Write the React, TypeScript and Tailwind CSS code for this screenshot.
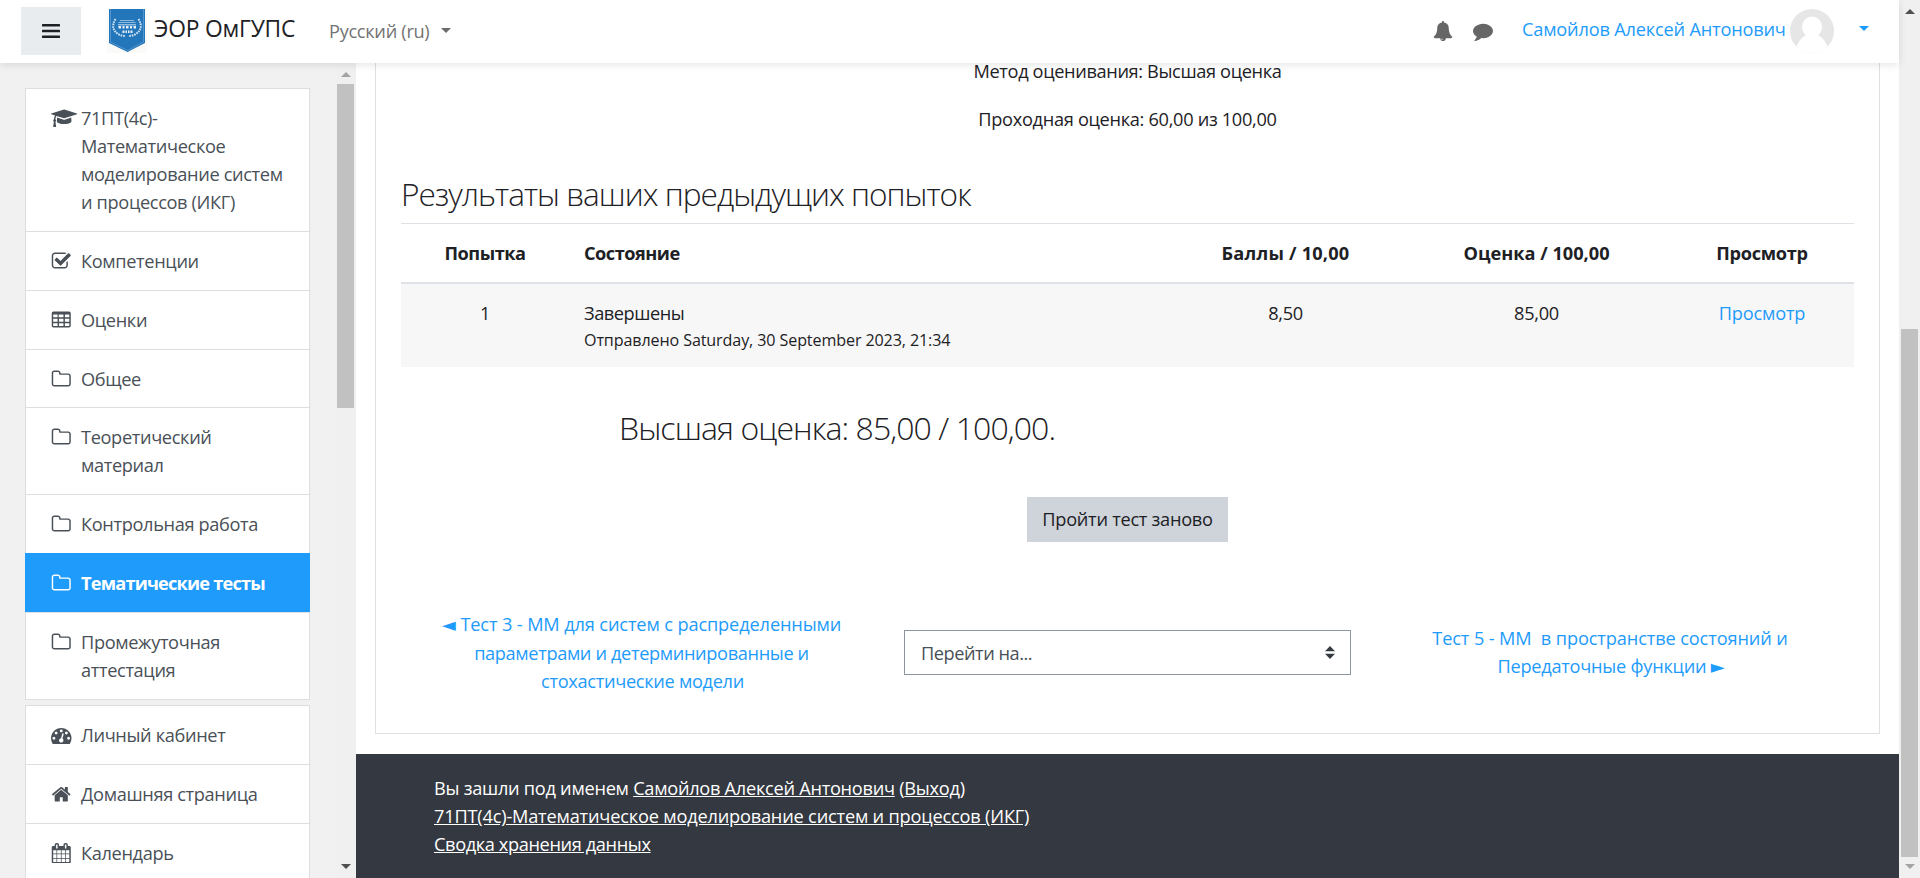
import type { ReactNode } from "react";

const paths = {
  folder:
    "M1600 1312v-704q0-40-28-68t-68-28h-704q-40 0-68-28t-28-68v-64q0-40-28-68t-68-28h-320q-40 0-68 28t-28 68v960q0 40 28 68t68 28h1216q40 0 68-28t28-68zm128-704v704q0 92-66 158t-158 66h-1216q-92 0-158-66t-66-158v-960q0-92 66-158t158-66h320q92 0 158 66t66 158v32h672q92 0 158 66t66 158z",
  check:
    "M1472 930v318q0 119-84.5 203.5t-203.5 84.5h-832q-119 0-203.5-84.5t-84.5-203.5v-832q0-119 84.5-203.5t203.5-84.5h832q63 0 117 25 15 7 18 23 3 17-9 29l-49 49q-10 10-23 10-3 0-9-2-23-6-45-6h-832q-66 0-113 47t-47 113v832q0 66 47 113t113 47h832q66 0 113-47t47-113v-254q0-13 9-22l64-64q10-10 23-10 6 0 12 3 20 8 20 29zm231-489l-814 814q-24 24-57 24t-57-24l-430-430q-24-24-24-57t24-57l110-110q24-24 57-24t57 24l263 263 647-647q24-24 57-24t57 24l110 110q24 24 24 57t-24 57z",
  table:
    "M224 128h1344a160 160 0 0 1 160 160v1088a160 160 0 0 1-160 160H224a160 160 0 0 1-160-160V288a160 160 0 0 1 160-160zM192 416v192a32 32 0 0 0 32 32h320a32 32 0 0 0 32-32V416a32 32 0 0 0-32-32H224a32 32 0 0 0-32 32zM704 384a32 32 0 0 0-32 32v192a32 32 0 0 0 32 32h352a32 32 0 0 0 32-32V416a32 32 0 0 0-32-32zM1248 384a32 32 0 0 0-32 32v192a32 32 0 0 0 32 32h320a32 32 0 0 0 32-32V416a32 32 0 0 0-32-32zM192 768h384v256H192zM704 768h384v256H704zM1216 768h384v256h-384zM192 1152h384v256H192zM704 1152h384v256H704zM1216 1152h384v256h-384z",
  gauge:
    "M384 1152q0-53-37.5-90.5t-90.5-37.5-90.5 37.5-37.5 90.5 37.5 90.5 90.5 37.5 90.5-37.5 37.5-90.5zm192-448q0-53-37.5-90.5t-90.5-37.5-90.5 37.5-37.5 90.5 37.5 90.5 90.5 37.5 90.5-37.5 37.5-90.5zm428 481l101-382q6-26-7.5-48.5t-38.5-29.5-48 6.5-30 39.5l-101 382q-60 5-107 43.5t-63 98.5q-20 77 20 146t117 89 146-20 89-117q16-60-6-117t-72-91zm660-33q0-53-37.5-90.5t-90.5-37.5-90.5 37.5-37.5 90.5 37.5 90.5 90.5 37.5 90.5-37.5 37.5-90.5zm-640-640q0-53-37.5-90.5t-90.5-37.5-90.5 37.5-37.5 90.5 37.5 90.5 90.5 37.5 90.5-37.5 37.5-90.5zm448 192q0-53-37.5-90.5t-90.5-37.5-90.5 37.5-37.5 90.5 37.5 90.5 90.5 37.5 90.5-37.5 37.5-90.5zm320 448q0 261-141 483-19 29-54 29h-1402q-35 0-54-29-141-221-141-483 0-182 71-348t191-286 286-191 348-71 348 71 286 191 191 286 71 348z",
  home: "M1472 992v480q0 26-19 45t-45 19h-384v-384h-256v384h-384q-26 0-45-19t-19-45v-480q0-1 .5-3t.5-3l575-474 575 474q1 2 1 6zm223-69l-62 74q-8 9-21 11h-3q-13 0-21-7l-692-577-692 577q-12 8-24 7-13-2-21-11l-62-74q-8-10-7-23.5t11-21.5l719-599q32-26 76-26t76 26l244 204v-195q0-14 9-23t23-9h192q14 0 23 9t9 23v408l219 182q10 8 11 21.5t-7 23.5z",
  calendar:
    "M192 256h128v-96a160 160 0 0 1 160-160h64a160 160 0 0 1 160 160v96h384v-96a160 160 0 0 1 160-160h64a160 160 0 0 1 160 160v96h128a128 128 0 0 1 128 128v1280a128 128 0 0 1-128 128H192a128 128 0 0 1-128-128V384a128 128 0 0 1 128-128zM480 128a32 32 0 0 0-32 32v288a32 32 0 0 0 32 32h64a32 32 0 0 0 32-32V160a32 32 0 0 0-32-32zM1248 128a32 32 0 0 0-32 32v288a32 32 0 0 0 32 32h64a32 32 0 0 0 32-32V160a32 32 0 0 0-32-32zM192 640h288v288H192zM544 640h320v288H544zM928 640h320v288H928zM1312 640h288v288h-288zM192 992h288v320H192zM544 992h320v320H544zM928 992h320v320H928zM1312 992h288v320h-288zM192 1376h288v288H192zM544 1376h320v288H544zM928 1376h320v288H928zM1312 1376h288v288h-288z",
  cap: "M1774 836l18 316q4 69-82 128t-235 93.5-323 34.5-323-34.5-235-93.5-82-128l18-316 574 181q22 7 48 7t48-7zm530-324q0 23-22 31l-1120 352q-4 1-10 1t-10-1l-652-206q-43 34-71 111.5t-34 178.5q63 36 63 109 0 69-58 107l58 433q2 14-8 25-9 11-24 11h-192q-15 0-24-11-10-11-8-25l58-433q-58-38-58-107 0-73 65-111 11-207 98-330l-333-104q-22-8-22-31t22-31l1120-352q4-1 10-1t10 1l1120 352q22 8 22 31z",
  bell: "M912 1696q0-16-16-16-59 0-101.5-42.5t-42.5-101.5q0-16-16-16t-16 16q0 73 51.5 124.5t124.5 51.5q16 0 16-16zm816-288q0 52-38 90t-90 38h-448q0 106-75 181t-181 75-181-75-75-181h-448q-52 0-90-38t-38-90q50-42 91-88t85-119.5 74.5-158.5 50-206 19.5-260q0-152 117-282.5t307-158.5q-8-19-8-39 0-40 28-68t68-28 68 28 28 68q0 20-8 39 190 28 307 158.5t117 282.5q0 139 19.5 260t50 206 74.5 158.5 85 119.5 91 88z",
  comment:
    "M1792 896q0 174-120 321.5t-326 233-450 85.5q-70 0-145-8-198 175-460 242-49 14-114 22-17 2-30.5-9t-17.5-29v-1q-3-4-.5-12t2-10 4.5-9.5l6-9 7-8.5 8-9q7-8 31-34.5t34.5-38 31-39.5 32.5-51 27-59 26-76q-157-89-247.5-220t-90.5-281q0-130 71-248.5t191-204.5 286-136.5 348-50.5q244 0 450 85.5t326 233 120 321.5z",
};

type IconName = keyof typeof paths;

function Icon({ name, className }: { name: IconName; className: string }) {
  return (
    <svg
      viewBox={name === "cap" ? "0 0 2304 1792" : "0 0 1792 1792"}
      className={className}
      fill="currentColor"
      fillRule="evenodd"
    >
      <path d={paths[name]} />
    </svg>
  );
}

function Arrow({ up, className }: { up?: boolean; className: string }) {
  return (
    <svg viewBox="0 0 10 5" className={className} fill="currentColor">
      <path d={up ? "M0 5L5 0L10 5z" : "M0 0L5 5L10 0z"} />
    </svg>
  );
}

function Row({
  icon,
  active,
  height,
  children,
}: {
  icon: IconName;
  active?: boolean;
  height: string;
  children: ReactNode;
}) {
  return (
    <a
      className={`${height} flex shrink-0 leading-[28px] ${
        active
          ? "relative -mx-px -mt-px border-b border-[#dee2e6] bg-[#1e9bfb] pt-[16px] pl-[26px] font-bold tracking-[-0.8px] text-white"
          : "border-b border-[#dedede] bg-white pt-[15px] pl-[25px] tracking-[-0.35px] text-[#495057]"
      }`}
    >
      <span className="flex h-[28px] w-[30px] shrink-0 items-center">
        <Icon
          name={icon}
          className={icon === "cap" ? "h-[20.5px] w-[26.3px] shrink-0" : "size-[20.5px] shrink-0"}
        />
      </span>
      <span className="whitespace-nowrap">{children}</span>
    </a>
  );
}

function Navbar() {
  return (
    <header className="relative z-10 flex h-[63px] w-[1899px] shrink-0 items-start bg-white shadow-[0_2px_8px_rgba(0,0,0,0.1)]">
      <button className="mt-[7px] ml-[21px] flex h-[48px] w-[60px] items-center justify-center bg-[#e9ecef]">
        <svg viewBox="0 0 18 14" className="h-[14px] w-[18px]" fill="#1d2125">
          <rect width="18" height="2.6" rx="0.6" />
          <rect y="5.7" width="18" height="2.6" rx="0.6" />
          <rect y="11.4" width="18" height="2.6" rx="0.6" />
        </svg>
      </button>
      <svg viewBox="0 0 40 44" className="mt-[9px] ml-[26px] h-[44px] w-[40px]">
        <rect width="40" height="44" fill="#fafaf9" />
        <path d="M2 0h36v34L20.500 43L2 34z" fill="#2476ba" />
        <path d="M3.500 0v33L20.500 41.500L36.500 33V0" fill="none" stroke="#5d9bd0" strokeWidth="0.8" />
        <g fill="none" stroke="#d4e5f3" strokeWidth="2" strokeDasharray="1.600 0.900">
          <path d="M8.500 10Q2.500 20 12 25.500Q15 27 18.500 27" />
          <path d="M31.500 10Q37.500 20 28 25.500Q25 27 21.500 27" />
        </g>
        <g fill="#8fbbdf">
          <path d="M13 11h14v1H13zM11.500 13h17v1H11.500zM11 15h18v1.500H11z" />
          <path d="M11.500 17h2.500v2.500h-2.500zM15.500 17h2v2.500h-2zM19 17h2.500v2.500h-2.500zM23 17h2v2.500h-2zM26.500 17h2.500v2.500h-2.500z" fill="#e8f1f8" />
          <path d="M15.500 21.500h2v2.500h-2zM18.500 21.500h1.500v2.500h-1.500zM21 21.500h1.500v2.500h-1.500zM23.500 21.500h2v2.500h-2z" fill="#e8f1f8" />
        </g>
      </svg>
      <span className="mt-[14px] ml-[7px] w-[175px] text-[22.8px] leading-[30px] tracking-[-0.2px] whitespace-nowrap text-[#1d2125]">
        ЭОР ОмГУПС
      </span>
      <span className="mt-[17px] w-[112px] leading-[28px] tracking-[-0.3px] whitespace-nowrap text-[#737373]">
        Русский (ru)
      </span>
      <Arrow className="mt-[28px] h-[5px] w-[10px] text-[#6b6b6b]" />
      <div className="ml-auto flex items-start">
        <Icon name="bell" className="mt-[21px] size-[20px] text-[#666]" />
        <Icon name="comment" className="mt-[21px] ml-[20px] size-[20px] text-[#666]" />
        <span className="mt-[15px] ml-[29px] w-[268px] leading-[28px] tracking-[-0.19px] whitespace-nowrap text-[#1e9bfb]">
          Самойлов Алексей Антонович
        </span>
        <svg viewBox="0 0 44 44" className="mt-[9px] size-[44px]">
          <clipPath id="avatar">
            <circle cx="22" cy="22" r="22" />
          </clipPath>
          <g clipPath="url(#avatar)">
            <rect width="44" height="44" fill="#e6e6e6" />
            <ellipse cx="22" cy="18" rx="10" ry="10.500" fill="#fff" />
            <path d="M17 26h10q9 3 11 15H6Q8 29 17 26z" fill="#fff" />
            <rect y="38.500" width="44" height="6" fill="#fff" />
          </g>
        </svg>
        <Arrow className="mt-[26px] mr-[30px] ml-[25px] h-[5px] w-[10px] text-[#1e9bfb]" />
      </div>
    </header>
  );
}

function Sidebar() {
  return (
    <aside className="flex w-[356px] shrink-0 overflow-hidden bg-[#f1f1f1]">
      <div className="w-[335px] pt-[25px] pl-[25px]">
        <nav className="flex w-[285px] flex-col border border-b-0 border-[#dedede]">
          <Row icon="cap" height="h-[143px]">
            71ПТ(4с)-
            <br />
            Математическое
            <br />
            моделирование систем
            <br />и процессов (ИКГ)
          </Row>
          <Row icon="check" height="h-[59px]">Компетенции</Row>
          <Row icon="table" height="h-[59px]">Оценки</Row>
          <Row icon="folder" height="h-[58px]">Общее</Row>
          <Row icon="folder" height="h-[87px]">
            Теоретический
            <br />
            материал
          </Row>
          <Row icon="folder" height="h-[59px]">Контрольная работа</Row>
          <Row icon="folder" height="h-[60px]" active>Тематические тесты</Row>
          <Row icon="folder" height="h-[87px]">
            Промежуточная
            <br />
            аттестация
          </Row>
        </nav>
        <nav className="mt-[5px] flex w-[285px] flex-col border border-[#dedede]">
          <Row icon="gauge" height="h-[59px]">Личный кабинет</Row>
          <Row icon="home" height="h-[59px]">Домашняя страница</Row>
          <Row icon="calendar" height="h-[59px]">Календарь</Row>
        </nav>
      </div>
      <div className="flex w-[21px] flex-col items-center bg-[#f0f0f0] pt-[9px] pb-[9px]">
        <Arrow up className="h-[5px] w-[10px] text-[#a3a3a3]" />
        <div className="mt-[7px] h-[324px] w-[17px] bg-[#c1c1c1]" />
        <Arrow className="mt-auto h-[5px] w-[10px] text-[#505050]" />
      </div>
    </aside>
  );
}

const cols = "grid grid-cols-[168px_599px_235px_267px_184px]";

function Content() {
  return (
    <main className="mx-[19px] flex h-[671px] flex-col border-x border-b border-[#dee0e2] px-[25px] text-[#1d2125]">
      <p className="-mt-[6px] h-[28px] text-center leading-[28px] tracking-[-0.36px]">Метод оценивания: Высшая оценка</p>
      <p className="mt-[20px] h-[28px] text-center leading-[28px]">Проходная оценка: 60,00 из 100,00</p>
      <h3 className="mt-[40px] h-[41px] text-[31.6px] leading-[41px] font-light tracking-[-0.97px] whitespace-nowrap">
        Результаты ваших предыдущих попыток
      </h3>
      <div className="mt-[9px]">
        <div
          className={`${cols} h-[61px] border-t border-b-2 border-t-[#dee2e6] border-b-[#dee2e6] pt-[15px] text-center leading-[28px] font-bold tracking-[-0.5px]`}
        >
          <span>Попытка</span>
          <span className="pl-[15px] text-left">Состояние</span>
          <span className="tracking-[0.2px]">Баллы / 10,00</span>
          <span className="tracking-[0px]">Оценка / 100,00</span>
          <span className="tracking-[-0.3px]">Просмотр</span>
        </div>
        <div className={`${cols} h-[83px] bg-[#f7f7f7] pt-[15px] text-center leading-[28px]`}>
          <span>1</span>
          <span className="flex flex-col pl-[15px] text-left">
            <span className="tracking-[-0.45px]">Завершены</span>
            <span className="text-[16.1px] leading-[26px] tracking-[-0.11px]">
              Отправлено Saturday, 30 September 2023, 21:34
            </span>
          </span>
          <span>8,50</span>
          <span>85,00</span>
          <a className="tracking-[-0.2px] text-[#1e9bfb]">Просмотр</a>
        </div>
      </div>
      <h3 className="mt-[40px] ml-[218px] h-[41px] text-[32px] leading-[41px] font-light tracking-[-0.92px] whitespace-nowrap">
        Высшая оценка: 85,00 / 100,00.
      </h3>
      <button className="mt-[49px] h-[45px] w-[201px] self-center bg-[#ced4da] text-center tracking-[-0.27px]">
        Пройти тест заново
      </button>
      <div className="mt-[63px] flex h-[95px] items-center text-center leading-[28px] whitespace-nowrap">
        <a className="w-[481px] pb-[1px] text-[#1e9bfb]">
          <span className="tracking-[-0.13px]">
            <span className="inline-block font-['DejaVu_Sans'] tracking-normal">◄</span> Тест 3 - ММ для систем с
            распределенными
          </span>
          <br />
          <span className="tracking-[-0.36px]">параметрами и детерминированные и</span>
          <br />
          <span className="pl-[2px]">стохастические модели</span>
        </a>
        <div className="ml-[22px] flex h-[45px] w-[447px] items-center justify-between border border-[#8f959e] pr-[15px] pl-[16px] text-[#495057]">
          <span className="tracking-[-0.46px]">Перейти на...</span>
          <svg viewBox="0 0 10 13" className="h-[13px] w-[10px]" fill="#343a40">
            <path d="M0 5.300L5 0L10 5.300zM0 7.700L5 13L10 7.700z" />
          </svg>
        </div>
        <a className="ml-[15px] w-[488px] pb-[1px] text-[#1e9bfb]">
          <span className="tracking-[-0.12px]">Тест 5 - ММ &nbsp;в пространстве состояний и</span>
          <br />
          <span className="pl-[2px] tracking-[-0.25px]">
            Передаточные функции <span className="inline-block font-['DejaVu_Sans']">►</span>
          </span>
        </a>
      </div>
    </main>
  );
}

export default function App() {
  return (
    <div className="flex h-[878px] w-[1920px] overflow-hidden bg-white font-['Open_Sans',sans-serif] text-[18.2px] tracking-[-0.31px]">
      <div className="flex w-[1899px] shrink-0 flex-col">
        <Navbar />
        <div className="flex h-[815px]">
          <Sidebar />
          <div className="flex w-[1543px] flex-col">
            <Content />
            <footer className="mt-[20px] flex-1 bg-[#343840] pt-[20px] pl-[78px] leading-[28px] text-white">
              <div className="tracking-[-0.27px]">
                Вы зашли под именем <a className="underline">Самойлов Алексей Антонович</a> (
                <a className="underline">Выход</a>)
              </div>
              <a className="block tracking-[-0.19px] underline">
                71ПТ(4с)-Математическое моделирование систем и процессов (ИКГ)
              </a>
              <a className="block tracking-[-0.38px] underline">Сводка хранения данных</a>
            </footer>
          </div>
        </div>
      </div>
      <div className="flex w-[21px] flex-col items-center bg-[#f0f0f0] pt-[9px] pb-[9px]">
        <Arrow up className="h-[5px] w-[10px] text-[#505050]" />
        <div className="mt-[315px] h-[528px] w-[17px] bg-[#c1c1c1]" />
        <Arrow className="mt-auto h-[5px] w-[10px] text-[#a3a3a3]" />
      </div>
    </div>
  );
}
